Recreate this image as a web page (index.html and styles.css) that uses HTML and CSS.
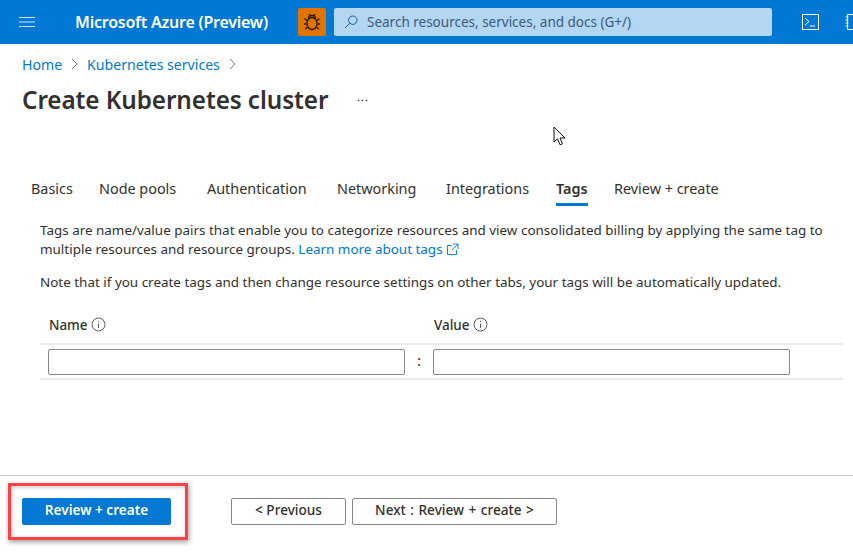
FILE: index.html
```html
<!DOCTYPE html>
<html lang="en">
<head>
<meta charset="utf-8">
<title>Create Kubernetes cluster</title>
<link rel="stylesheet" href="styles.css">
</head>
<body>
<div class="page">
  <header class="topbar">
    <svg class="menu" width="16" height="12" viewBox="0 0 16 12"><path d="M0 1.500h16M0 6h16M0 10.500h16" stroke="#cfe4f7" stroke-width="1"/></svg>
    <div class="brand">Microsoft Azure (Preview)</div>
    <div class="bug">
      <svg width="20" height="20" viewBox="0 0 20 20" fill="none" stroke="#2b1a08" stroke-width="1.300"><ellipse cx="10" cy="11.500" rx="5" ry="6"/><path d="M6.500 6.500a3.500 3 0 0 1 7 0M7 2l1.600 2.400M13 2l-1.600 2.400M5 8.500 2.500 6.500M15 8.500l2.500-2M4.800 12H2M15.200 12H18M5.600 15l-2.400 2.200M14.400 15l2.400 2.200"/></svg>
    </div>
    <div class="search">
      <svg width="14" height="14" viewBox="0 0 14 14" fill="none" stroke="#1f5b9e" stroke-width="1"><circle cx="8.800" cy="5.200" r="4.200"/><path d="M5.800 8.200 1 13"/></svg>
      <span>Search resources, services, and docs (G+/)</span>
    </div>
    <svg class="shell" width="17" height="16" viewBox="0 0 17 16" fill="none" stroke="#fff" stroke-width="1"><rect x=".5" y=".5" width="16" height="15"/><path d="M3 4l4 3.500L3 11M8 12h5"/></svg>
    <svg class="notebook" width="8" height="16" viewBox="0 0 8 16" fill="none" stroke="#fff" stroke-width="1"><path d="M2.500 .5h6v15h-6zM.5 3h3M.5 6h3M.5 9h3M.5 12h3"/></svg>
  </header>

  <main class="main">
    <nav class="crumbs">
      <a class="link" href="#">Home</a>
      <svg width="7" height="12" viewBox="0 0 7 12" fill="none" stroke="#7a7a7a"><path d="M1 1l5 5-5 5"/></svg>
      <a class="link" href="#">Kubernetes services</a>
      <svg width="7" height="12" viewBox="0 0 7 12" fill="none" stroke="#7a7a7a"><path d="M1 1l5 5-5 5"/></svg>
    </nav>
    <div class="title-row">
      <h1>Create Kubernetes cluster</h1>
      <svg class="more" width="11" height="3" viewBox="0 0 11 3" fill="#323130"><circle cx="1.500" cy="1.500" r=".8"/><circle cx="5.500" cy="1.500" r=".8"/><circle cx="9.500" cy="1.500" r=".8"/></svg>
    </div>

    <div class="tabs">
      <span class="tab">Basics</span>
      <span class="tab">Node pools</span>
      <span class="tab">Authentication</span>
      <span class="tab">Networking</span>
      <span class="tab">Integrations</span>
      <span class="tab active">Tags</span>
      <span class="tab">Review + create</span>
    </div>

    <section class="content">
      <p class="intro">Tags are name/value pairs that enable you to categorize resources and view consolidated billing by applying the same tag to multiple resources and resource groups. <a class="link" href="#">Learn more about tags
        <svg width="12" height="12" viewBox="0 0 12 12" fill="none" stroke="#0078d4" stroke-width=".9"><path d="M5 2.500H.5v9h9V7M6 1h5v5M11 1 5 7"/></svg></a></p>
      <p class="note">Note that if you create tags and then change resource settings on other tabs, your tags will be automatically updated.</p>

      <div class="grid-head">
        <div class="col-name">Name
          <svg width="15" height="15" viewBox="0 0 15 15" fill="none" stroke="#5f5f5f"><circle cx="7.500" cy="7.500" r="6.500"/><path d="M7.500 6.500v4.500M7.500 3.800v1.200"/></svg>
        </div>
        <div class="col-value">Value
          <svg width="15" height="15" viewBox="0 0 15 15" fill="none" stroke="#5f5f5f"><circle cx="7.500" cy="7.500" r="6.500"/><path d="M7.500 6.500v4.500M7.500 3.800v1.200"/></svg>
        </div>
      </div>
      <div class="grid-row">
        <input class="field field-name" type="text" aria-label="Name">
        <span class="colon">:</span>
        <input class="field field-value" type="text" aria-label="Value">
      </div>
    </section>
  </main>

  <footer class="footer">
    <button class="btn primary">Review + create</button>
    <button class="btn prev">&lt; Previous</button>
    <button class="btn next">Next : Review + create &gt;</button>
  </footer>

  <div class="callout"></div>
  <svg class="cursor" width="14" height="20" viewBox="0 0 14 20"><path d="M1 1v15l3.500-3.200 2.500 6 2.500-1-2.500-5.800H12z" fill="#fff" stroke="#111" stroke-width="1"/></svg>
</div>
</body>
</html>
```

FILE: styles.css
```css
* { box-sizing: border-box; }
html, body { margin: 0; height: 100%; }
body {
  font-family: "Noto Sans", "Open Sans", sans-serif;
  color: #323130;
  background: #fff;
  overflow: hidden;
}
.page {
  position: relative;
  width: 853px;
  height: 552px;
  display: flex;
  flex-direction: column;
  overflow: hidden;
}
.topbar {
  height: 44px;
  flex: none;
  background: #0078d4;
  display: flex;
  align-items: center;
  padding-left: 19px;
}
.menu { flex: none; }
.brand {
  margin-left: 40px;
  width: 223px;
  flex: none;
  color: #fff;
  font-size: 16px;
  font-weight: 600;
  white-space: nowrap;
  letter-spacing: -.23px;
}
.bug {
  width: 28px;
  height: 28px;
  flex: none;
  border-radius: 2px;
  background: #e07400;
  display: flex;
  align-items: center;
  justify-content: center;
}
.search {
  margin-left: 8px;
  width: 438px;
  height: 28px;
  flex: none;
  border-radius: 2px;
  background: #b3d6f2;
  display: flex;
  align-items: center;
  gap: 9px;
  padding-left: 10px;
  color: #3d5a80;
  font-size: 13.500px;
  white-space: nowrap;
}
.shell { margin-left: 30px; flex: none; }
.notebook { margin-left: 26px; flex: none; }
.main {
  flex: 1;
  min-height: 0;
  padding-left: 22px;
}
.link { color: #0078d4; text-decoration: none; }
.crumbs {
  height: 20px;
  margin-top: 10px;
  display: flex;
  align-items: center;
  gap: 9px;
  font-size: 14.100px;
}
h1 {
  margin: 0;
  font-size: 24.300px;
  font-weight: 600;
  line-height: 32px;
  letter-spacing: -.1px;
}
.title-row {
  margin-top: 10px;
  height: 32px;
  display: flex;
  align-items: center;
}
.more {
  margin-left: 29px;
  flex: none;
}
.tabs {
  margin-top: 63px;
  margin-left: 9px;
  height: 27px;
  display: grid;
  grid-template-columns: 68px 108px 130px 109px 110px 58px auto;
  font-size: 14.400px;
}
.tab {
  height: 27px;
  line-height: 20px;
  white-space: nowrap;
  justify-self: start;
}
.tab.active {
  font-weight: 600;
  border-bottom: 3px solid #0078d4;
}
.content {
  margin-left: 18px;
  font-size: 13.450px;
  line-height: 19px;
}
.intro { margin: 15px 0 0; width: 790px; }
.intro svg { margin-left: 1px; vertical-align: -1px; }
.note { margin: 14px 0 0; white-space: nowrap; }
.grid-head {
  margin-top: 24px;
  height: 29px;
  width: 803px;
  display: flex;
  padding-left: 9px;
  font-weight: 500;
  border-bottom: 2px solid #edebe9;
}
.grid-head svg { vertical-align: -2px; }
.col-name { width: 385px; }
.grid-row {
  height: 35px;
  width: 803px;
  display: flex;
  align-items: center;
  padding-left: 8px;
  border-bottom: 2px solid #edebe9;
}
.field {
  height: 26px;
  border: 1px solid #8a8886;
  border-radius: 2px;
  background: #fff;
  padding: 0;
  outline: none;
}
.field-name, .field-value { width: 357px; }
.colon {
  width: 28px;
  text-align: center;
  font-weight: 500;
}
.footer {
  flex: none;
  height: 77px;
  border-top: 1px solid #c8c6c4;
  display: flex;
  padding: 22px 0 0 22px;
  align-items: flex-start;
}
.btn {
  height: 27px;
  border-radius: 2px;
  border: 1px solid #8a8886;
  background: #fff;
  color: #323130;
  font-family: inherit;
  font-size: 13.600px;
  font-weight: 500;
  padding: 0 0 4px;
}
.primary {
  width: 149px;
  border-color: #0078d4;
  background: #0078d4;
  color: #fff;
  font-weight: 600;
}
.prev { width: 115px; margin-left: 60px; }
.next { width: 205px; margin-left: 6px; word-spacing: 1px; }
.callout {
  position: absolute;
  left: 8px;
  top: 483px;
  width: 180px;
  height: 57px;
  border: 3px solid #fb4245;
  box-shadow: 1px 2px 5px rgba(0, 0, 0, .4), inset 1px 1px 4px rgba(0, 0, 0, .25);
}
.cursor {
  position: absolute;
  left: 553px;
  top: 126px;
}
```
